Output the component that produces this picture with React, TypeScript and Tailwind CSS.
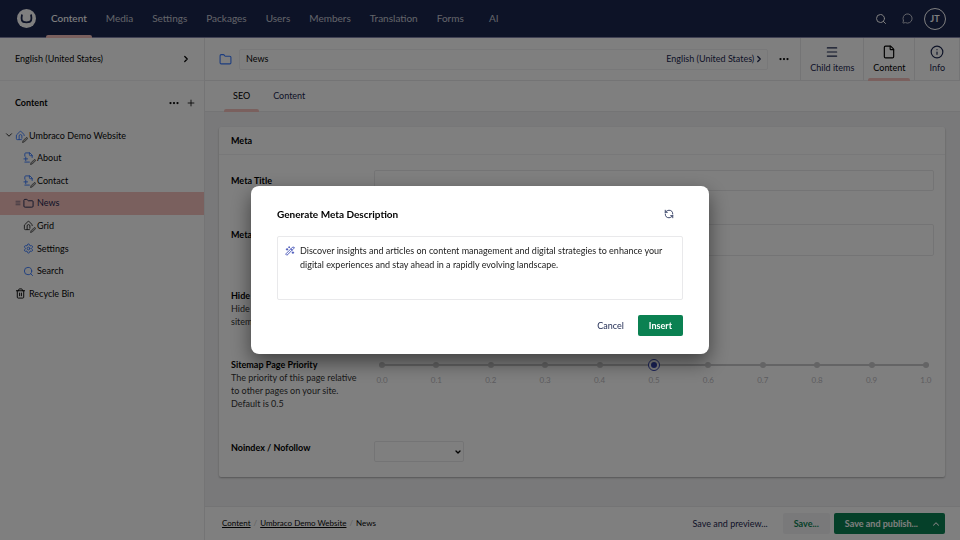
import { useState, type ComponentType, type ReactNode } from "react";
import {
  ChevronDown,
  ChevronRight,
  ChevronUp,
  Ellipsis,
  File,
  Folder,
  Info,
  Menu,
  MessageCircle,
  Plus,
  RefreshCcw,
  Search,
  Settings,
  WandSparkles,
} from "lucide-react";

type IconType = ComponentType<{ className?: string }>;

const sections = ["Content", "Media", "Settings", "Packages", "Users", "Members", "Translation", "Forms", "AI"];

const stroke = {
  viewBox: "0 0 24 24",
  fill: "none",
  stroke: "currentColor",
  strokeWidth: 2,
  strokeLinecap: "round",
  strokeLinejoin: "round",
} as const;

function HomeIcon({ className }: { className?: string }) {
  return (
    <svg {...stroke} className={className}>
      <path d="M20 12v-2L13.400 3.600a2 2 0 0 0-2.800 0L3 11v8a2 2 0 0 0 2 2h9" />
      <path d="M9 21v-8a3 3 0 0 1 6 0v5" />
    </svg>
  );
}

function PageIcon({ className }: { className?: string }) {
  return (
    <svg {...stroke} className={className}>
      <path d="M4 9V4a2 2 0 0 1 2-2h9l5 5v5" />
      <path d="M14 2v4a2 2 0 0 0 2 2h4" />
      <path d="M2 15h8M6 11v8M4 22h10" />
    </svg>
  );
}

function BinIcon({ className }: { className?: string }) {
  return (
    <svg {...stroke} className={className}>
      <path d="M3 6h18" />
      <path d="M8 6V4a2 2 0 0 1 2-2h4a2 2 0 0 1 2 2v2" />
      <path d="M5 6v14a2 2 0 0 0 2 2h10a2 2 0 0 0 2-2V6" />
      <path d="M10 11v6M14 11v6" />
    </svg>
  );
}

// small pen shown over the icon of a page with unpublished changes
function DraftMark() {
  return (
    <svg viewBox="0 0 12 12" className="absolute -bottom-0.5 -right-0.5 size-1.5">
      <path d="M1 11l1-3.500 6-6a1.600 1.600 0 0 1 2.500 2.500l-6 6z" fill="#bbb" stroke="#444" strokeWidth="1.400" strokeLinejoin="round" />
    </svg>
  );
}

type TreeNode = {
  label: string;
  icon: IconType;
  tone: string;
  child?: boolean;
  open?: boolean;
  draft?: boolean;
  active?: boolean;
};

const tree: TreeNode[] = [
  { label: "Umbraco Demo Website", icon: HomeIcon, tone: "text-[#3879ff]", open: true, draft: true },
  { label: "About", icon: PageIcon, tone: "text-[#3879ff]", child: true, draft: true },
  { label: "Contact", icon: PageIcon, tone: "text-[#3879ff]", child: true, draft: true },
  { label: "News", icon: Folder, tone: "text-[#1b264f]", child: true, active: true },
  { label: "Grid", icon: HomeIcon, tone: "text-[#2b2b2b]", child: true, draft: true },
  { label: "Settings", icon: Settings, tone: "text-[#3879ff]", child: true },
  { label: "Search", icon: Search, tone: "text-[#3879ff]", child: true },
  { label: "Recycle Bin", icon: BinIcon, tone: "text-black" },
];

const ticks = ["0.0", "0.1", "0.2", "0.3", "0.4", "0.5", "0.6", "0.7", "0.8", "0.9", "1.0"];

function Logo() {
  return (
    <svg viewBox="0 0 40 40" className="size-[19px]" aria-label="Umbraco" role="img">
      <circle cx="20" cy="20" r="20" fill="#fff" />
      <path
        d="M10.500 11.500c-1 5-1.200 9.500-.2 12.500s3.700 4 9.700 4 8.700-1 9.700-4 .8-7.500-.2-12.500"
        fill="none"
        stroke="#1b264f"
        strokeWidth="3.800"
      />
    </svg>
  );
}

function TopBar() {
  return (
    <header className="flex h-[38px] shrink-0 items-center border-b border-[#8384a8] bg-[#1b264f] pl-[17px] pr-3.5 text-white">
      <Logo />
      <nav className="ml-1.5 flex h-full gap-px">
        {sections.map((name, i) => (
          <a
            key={name}
            href="#"
            className={`relative flex min-w-10 items-center justify-center px-[9px] text-[10px] ${i === 0 ? "font-medium" : "text-white/75"}`}
          >
            {name}
            {i === 0 && <span className="absolute inset-x-1 -bottom-px h-[3px] rounded-t-xs bg-[#f5c1bc]" />}
          </a>
        ))}
      </nav>
      <div className="ml-auto flex items-center">
        <button aria-label="Search" className="mr-[15px]">
          <Search className="size-3" />
        </button>
        <button aria-label="Messages" className="mr-[11px]">
          <MessageCircle className="size-[11px] opacity-80" />
        </button>
        <button className="flex size-[22px] items-center justify-center rounded-full border border-white text-[9px] font-bold">
          JT
        </button>
      </div>
    </header>
  );
}

function TreeRow({ label, icon: Icon, tone, child, open, draft, active }: TreeNode) {
  return (
    <li className={`flex items-center ${active ? "bg-[#f5c1bc] text-[#1b264f]" : ""} ${child ? "pl-[15px]" : "pl-1"}`}>
      <span className={`flex shrink-0 ${child ? "w-2" : "w-[11px]"}`}>
        {open && <ChevronDown className="size-2.5" />}
        {active && <Menu className="size-1.5" />}
      </span>
      <a href="#" className="flex items-center">
        <span className="relative mr-[3px] flex">
          <Icon className={`size-[11px] ${tone}`} />
          {draft && <DraftMark />}
        </span>
        {label}
      </a>
    </li>
  );
}

function Sidebar() {
  return (
    <aside className="flex w-[205px] shrink-0 flex-col border-r border-[#e9e9eb] bg-white">
      <button className="flex h-[43px] items-center justify-between border-b border-[#f0f0f2] pl-[15px] pr-[13px]">
        English (United States)
        <ChevronRight className="size-2.5" strokeWidth={3} />
      </button>
      <div className="flex h-[43px] items-center pl-[15px] pr-2">
        <h2 className="mr-auto font-bold">Content</h2>
        <button aria-label="Actions" className="mr-1.5">
          <Ellipsis className="size-3" strokeWidth={2.500} />
        </button>
        <button aria-label="Create">
          <Plus className="size-2.5" />
        </button>
      </div>
      <ul className="grid h-[181px] auto-rows-fr">
        {tree.map((node) => (
          <TreeRow key={node.label} {...node} />
        ))}
      </ul>
    </aside>
  );
}

function ViewTab({ icon: Icon, label, active }: { icon: IconType; label: string; active?: boolean }) {
  return (
    <button
      className={`relative flex h-full flex-col items-center justify-center gap-0.5 border-l border-[#e9e9eb] pt-px ${
        label === "Info" ? "px-3.5" : "px-[9px]"
      } ${active ? "text-black" : "text-[#1b264f]"}`}
    >
      <Icon className="size-3.5" />
      <span className="leading-[13px]">{label}</span>
      {active && <span className="absolute inset-x-1 -bottom-px h-[3px] rounded-t-xs bg-[#f5c1bc]" />}
    </button>
  );
}

function EditorHeader() {
  return (
    <div className="flex h-[43px] shrink-0 items-center border-b border-r border-[#e9e9eb] bg-white pl-3.5">
      <Folder className="size-[13px] text-[#3879ff]" />
      <div className="ml-[7px] flex h-[21px] flex-1 items-center rounded-xs border border-[#f0f0f2] pl-1.5 pr-[3px]">
        <input aria-label="Name" defaultValue="News" className="min-w-0 flex-1 outline-none" />
        <button className="flex items-center text-[#1b264f]">
          English (United States)
          <ChevronRight className="size-2.5" strokeWidth={3} />
        </button>
      </div>
      <button aria-label="More" className="mx-2.5">
        <Ellipsis className="size-3" strokeWidth={2.500} />
      </button>
      <ViewTab icon={Menu} label="Child items" />
      <ViewTab icon={File} label="Content" active />
      <ViewTab icon={Info} label="Info" />
    </div>
  );
}

function EditorTabs() {
  return (
    <div className="flex h-[31px] shrink-0 border-b border-[#e9e9eb] bg-white pl-4">
      <button className="relative px-3 text-black">
        SEO
        <span className="absolute inset-x-[3px] -bottom-px h-[3px] rounded-t-xs bg-[#f5c1bc]" />
      </button>
      <button className="px-[11px] text-[#1b264f]">Content</button>
    </div>
  );
}

function Property({
  id,
  label,
  description,
  className,
  children,
}: {
  id: string;
  label: string;
  description?: string;
  className?: string;
  children: ReactNode;
}) {
  return (
    <div className={`flex ${className ?? ""}`}>
      <div className="w-[143px] shrink-0 pr-4 pt-1 leading-[13px]">
        <label htmlFor={id} className="block font-bold text-black">
          {label}
        </label>
        {description && <p className="text-[#333]">{description}</p>}
      </div>
      <div className="min-w-0 flex-1">{children}</div>
    </div>
  );
}

function PrioritySlider() {
  const [value, setValue] = useState(5);
  return (
    <div className="relative mx-[5px] pt-2">
      <div className="absolute inset-x-0 top-2.5 h-0.5 bg-[#c8c8ca]" />
      <div className="relative flex justify-between">
        {ticks.map((tick, i) => (
          <div key={tick} className="flex w-1.5 flex-col items-center">
            <span className="relative flex size-1.5 items-center justify-center rounded-full bg-[#c8c8ca]">
              {i === value && (
                <span className="absolute flex size-3 items-center justify-center rounded-full border border-[#3544b1] bg-white">
                  <span className="size-1.5 rounded-full bg-[#3544b1]" />
                </span>
              )}
            </span>
            <span className="mt-1.5 text-[8px] leading-3 text-[#bbbabf]">{tick}</span>
          </div>
        ))}
      </div>
      <input
        id="priority"
        type="range"
        min={0}
        max={10}
        value={value}
        onChange={(e) => setValue(Number(e.target.value))}
        className="absolute inset-x-0 top-0 h-5 w-full opacity-0"
      />
    </div>
  );
}

function MetaCard() {
  return (
    <section className="rounded-xs bg-white shadow-[0_1px_2px_rgba(0,0,0,0.3)]">
      <h3 className="flex h-7 items-center border-b border-[#f0f0f2] px-3 font-bold text-black">Meta</h3>
      <div className="pb-[15px] pl-3 pr-[11px] pt-[15px]">
        <Property id="meta-title" label="Meta Title" className="min-h-[54px]">
          <input id="meta-title" className="block h-[21px] w-full rounded-xs border border-[#e9e9eb] px-1.5" />
        </Property>
        <Property id="meta-description" label="Meta Description" className="min-h-[61px]">
          <textarea
            id="meta-description"
            className="block h-8 w-full resize-none rounded-xs border border-[#e9e9eb] px-1.5"
          />
        </Property>
        <Property id="hide" label="Hide From Sitemap" description="Hide this page from the XML sitemap" className="min-h-[69px]">
          <input id="hide" type="checkbox" className="mt-1 size-3" />
        </Property>
        <Property
          id="priority"
          label="Sitemap Page Priority"
          description="The priority of this page relative to other pages on your site. Default is 0.5"
          className="min-h-[83px]"
        >
          <PrioritySlider />
        </Property>
        <Property id="robots" label="Noindex / Nofollow">
          <div className="relative mt-1 w-[90px]">
            <select id="robots" className="block h-[21px] w-full appearance-none rounded-xs border border-[#e9e9eb] px-1.5">
              <option></option>
              <option>Noindex</option>
              <option>Nofollow</option>
            </select>
            <ChevronDown className="pointer-events-none absolute right-0.5 top-[7px] size-2" strokeWidth={4} />
          </div>
        </Property>
      </div>
    </section>
  );
}

function EditorFooter() {
  return (
    <footer className="flex h-[34px] shrink-0 items-center border-t border-[#e9e9eb] bg-white pl-[17px] pr-[15px]">
      <nav className="mr-auto flex gap-[3px] pb-0.5 text-[8px]">
        <a href="#" className="underline">
          Content
        </a>
        <span className="text-[#c4c4c4]">/</span>
        <a href="#" className="underline">
          Umbraco Demo Website
        </a>
        <span className="text-[#c4c4c4]">/</span>
        <span>News</span>
      </nav>
      <button className="mr-[15px] text-[#1b264f]">Save and preview...</button>
      <button className="mr-1 h-[21px] rounded-xs bg-[#f3f3f5] px-[11px] font-bold text-[#0b8152]">Save...</button>
      <div className="flex h-[21px] rounded-xs bg-[#0b8152] font-bold text-white">
        <button className="pl-[11px] pr-[9px]">Save and publish...</button>
        <button aria-label="More publish options" className="px-1">
          <ChevronUp className="size-2.5" strokeWidth={2.500} />
        </button>
      </div>
    </footer>
  );
}

function GenerateDialog() {
  return (
    <div className="fixed inset-0 flex items-center justify-center bg-black/50">
      <div
        role="dialog"
        aria-labelledby="dialog-title"
        className="w-[458px] rounded-lg bg-white px-[26px] pb-[18px] pt-5 shadow-[0_8px_20px_rgba(0,0,0,0.5)]"
      >
        <div className="flex h-4 items-center justify-between pr-[9px]">
          <h2 id="dialog-title" className="text-[10px] font-bold text-black">
            Generate Meta Description
          </h2>
          <button aria-label="Regenerate" className="text-[#1b264f]">
            <RefreshCcw className="size-2.5" />
          </button>
        </div>
        <div className="mt-3.5 flex h-16 gap-[5px] rounded-xs border border-[#e9e9eb] px-[7px] pt-[7px]">
          <WandSparkles className="mt-0.5 size-2.5 shrink-0 text-[#3544b1]" />
          <textarea
            aria-label="Generated description"
            className="min-w-0 flex-1 resize-none text-[9px] leading-[14px] text-[#222] outline-none"
            defaultValue="Discover insights and articles on content management and digital strategies to enhance your digital experiences and stay ahead in a rapidly evolving landscape."
          />
        </div>
        <div className="mt-[15px] flex justify-end gap-[3px]">
          <button className="h-[21px] px-[11px] text-[#1b264f]">Cancel</button>
          <button className="h-[21px] rounded-xs bg-[#0b8152] px-[11px] font-bold text-white">Insert</button>
        </div>
      </div>
    </div>
  );
}

export default function App() {
  return (
    <div className="flex h-screen flex-col overflow-hidden font-['Lato',sans-serif] text-[9px] text-[#060606]">
      <TopBar />
      <div className="flex min-h-0 flex-1">
        <Sidebar />
        <main className="flex min-w-0 flex-1 flex-col bg-[#f3f3f5]">
          <EditorHeader />
          <EditorTabs />
          <div className="min-h-0 flex-1 overflow-hidden pl-3.5 pr-[15px] pt-[15px]">
            <MetaCard />
          </div>
          <EditorFooter />
        </main>
      </div>
      <GenerateDialog />
    </div>
  );
}
